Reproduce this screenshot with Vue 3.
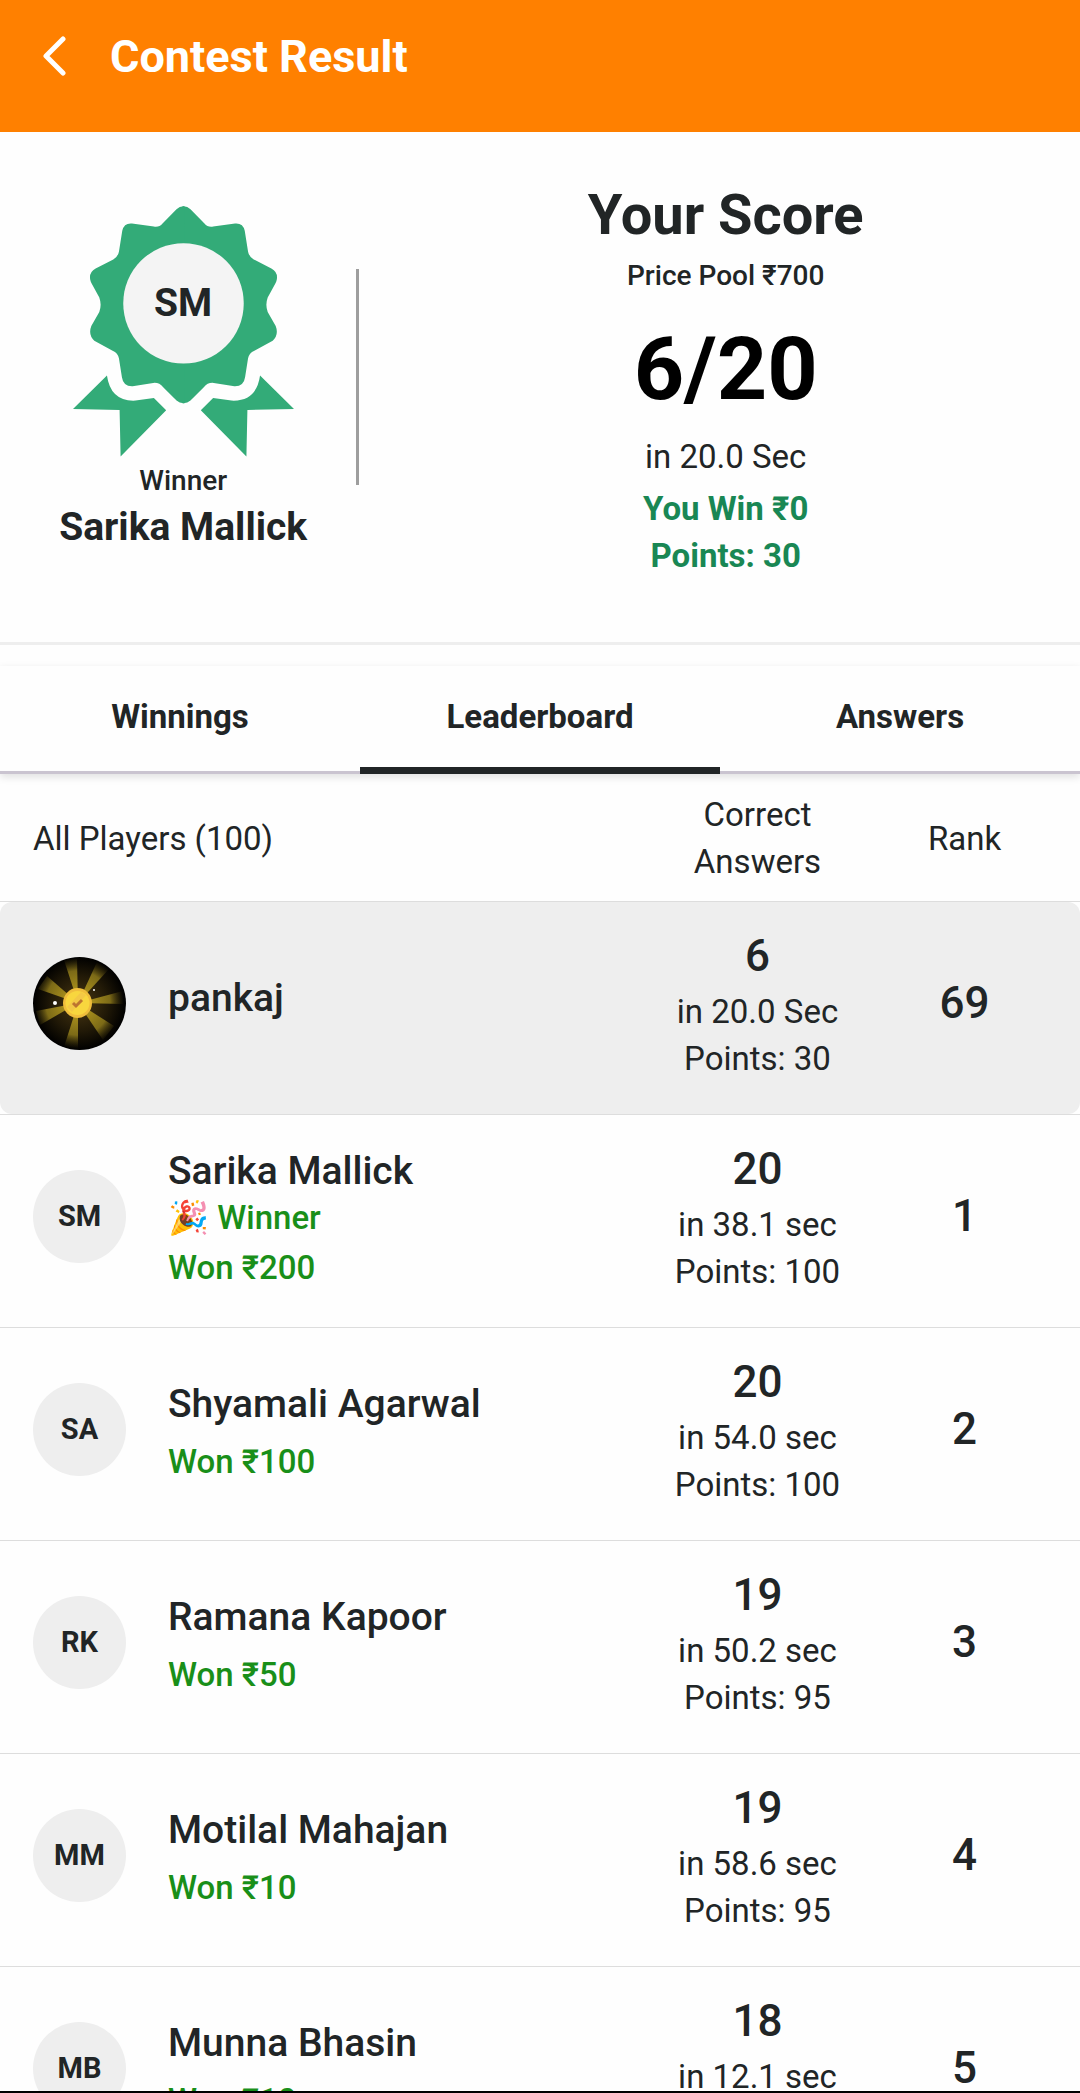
<script setup>
import { ref } from 'vue'

const tabs = ['Winnings', 'Leaderboard', 'Answers']
const active = ref('Leaderboard')

const players = [
  { id: 0, name: 'pankaj', me: true, correct: 6, time: 'in 20.0 Sec', points: 30, rank: 69 },
  { id: 1, initials: 'SM', name: 'Sarika Mallick', winner: true, won: 200, correct: 20, time: 'in 38.1 sec', points: 100, rank: 1 },
  { id: 2, initials: 'SA', name: 'Shyamali Agarwal', won: 100, correct: 20, time: 'in 54.0 sec', points: 100, rank: 2 },
  { id: 3, initials: 'RK', name: 'Ramana Kapoor', won: 50, correct: 19, time: 'in 50.2 sec', points: 95, rank: 3 },
  { id: 4, initials: 'MM', name: 'Motilal Mahajan', won: 10, correct: 19, time: 'in 58.6 sec', points: 95, rank: 4 },
  { id: 5, initials: 'MB', name: 'Munna Bhasin', won: 10, correct: 18, time: 'in 12.1 sec', points: 90, rank: 5 },
]
</script>

<template>
  <div class="screen">
    <header class="bar">
      <button class="back" type="button" aria-label="Back">
        <svg viewBox="0 0 24 42" width="24" height="42" aria-hidden="true">
          <path d="M21 4 4 21 21 38" fill="none" stroke="#fff" stroke-width="5" stroke-linecap="round" stroke-linejoin="round" />
        </svg>
      </button>
      <h1>Contest Result</h1>
    </header>

    <section class="summary">
      <div class="winner">
        <div class="medal">
          <svg viewBox="97 48 664 753" width="221" height="251" aria-hidden="true">
            <defs>
              <g id="medal-half" fill="#33ab78">
                <path d="M426 48H429Q441 48 450 57L492 100Q502 112 518 109L584 100Q608 98 613 122L623 185Q626 200 640 208L693 235Q714 246 709 270Q708 275 705 280L682 322Q674 344 682 366L706 408Q716 434 697 452L642 482Q626 489 623 505L614 562Q610 590 582 589L520 579Q502 577 490 592L450 632Q441 640 429 640H426Z" />
                <path d="M659 557 761 657 621 660 618 800 481 661 518 624 573 632Q648 636 659 557Z" />
              </g>
            </defs>
            <use href="#medal-half" />
            <use href="#medal-half" transform="matrix(-1 0 0 1 858 0)" />
            <circle cx="429" cy="340" r="181" fill="#f4f4f4" />
          </svg>
          <span class="medal-initials">SM</span>
        </div>
        <p class="small">Winner</p>
        <p class="winner-name">Sarika Mallick</p>
      </div>
      <div class="rule"></div>
      <div class="score">
        <h2>Your Score</h2>
        <p class="small pool">Price Pool ₹700</p>
        <p class="big">6/20</p>
        <p>in 20.0 Sec</p>
        <div class="gain">
          <p>You Win ₹0</p>
          <p>Points: 30</p>
        </div>
      </div>
    </section>

    <nav class="tabs" role="tablist">
      <button
        v-for="t in tabs"
        :key="t"
        type="button"
        role="tab"
        :aria-selected="active === t"
        :class="{ active: active === t }"
        @click="active = t"
      >{{ t }}</button>
    </nav>

    <table>
      <thead>
        <tr>
          <th class="all" scope="col">All Players (100)</th>
          <th scope="col">Correct<br />Answers</th>
          <th scope="col">Rank</th>
        </tr>
      </thead>
      <tbody>
        <tr v-for="p in players" :key="p.id" :class="{ me: p.me }">
          <td class="player">
            <span v-if="p.initials" class="avatar">{{ p.initials }}</span>
            <span v-else class="avatar coin">
              <svg viewBox="0 0 93 93" width="93" height="93" aria-hidden="true">
                <defs>
                  <radialGradient id="night">
                    <stop offset="0" stop-color="#4a3812" />
                    <stop offset="0.600" stop-color="#211907" />
                    <stop offset="1" stop-color="#000" />
                  </radialGradient>
                  <radialGradient id="ray" gradientUnits="userSpaceOnUse" cx="45" cy="46" r="46">
                    <stop offset="0.300" stop-color="#a58c1c" />
                    <stop offset="0.700" stop-color="#7c6a17" />
                    <stop offset="1" stop-color="#3a300a" stop-opacity="0" />
                  </radialGradient>
                </defs>
                <circle cx="46.500" cy="46.500" r="46.500" fill="url(#night)" />
                <g fill="url(#ray)">
                  <path d="M45 46 31 3 44 2Z" />
                  <path d="M45 46 64 5 76 12Z" />
                  <path d="M45 46 90 34 90 47Z" />
                  <path d="M45 46 81 69 70 83Z" />
                  <path d="M45 46 45 92 31 90Z" />
                  <path d="M45 46 7 68 3 54Z" />
                  <path d="M45 46 5 32 14 19Z" />
                </g>
                <ellipse cx="44.500" cy="46" rx="14.500" ry="15" fill="#efbd3c" />
                <circle cx="44.500" cy="46" r="12" fill="#f8d63e" />
                <path d="M34 50 48 35 53 38 39 55Z" fill="#f3c845" />
                <path d="M40 46 43 49 49 43" fill="none" stroke="#bd7430" stroke-width="3" />
                <circle cx="22" cy="46" r="2" fill="#fff" />
                <circle cx="61" cy="33" r="1" fill="#fff" />
              </svg>
            </span>
            <div class="who">
              <p class="name">{{ p.name }}</p>
              <p v-if="p.winner" class="tag">🎉 Winner</p>
              <p v-if="p.won" class="won">Won ₹{{ p.won }}</p>
            </div>
          </td>
          <td>
            <p class="num">{{ p.correct }}</p>
            <p>{{ p.time }}</p>
            <p>Points: {{ p.points }}</p>
          </td>
          <td class="num">{{ p.rank }}</td>
        </tr>
      </tbody>
    </table>
    <div class="edge"></div>
  </div>
</template>

<style>
body {
  margin: 0;
  background: #fefefe;
}
</style>

<style scoped>
.screen {
  position: relative;
  height: 100vh;
  overflow: hidden;
  font: 400 33px/47px Roboto, "Noto Sans", sans-serif;
  color: #212526;
}
h1, h2, p {
  margin: 0;
}
button {
  border: 0;
  padding: 0;
  background: none;
  font: inherit;
  color: inherit;
}
.bar {
  display: flex;
  align-items: center;
  height: 112px;
  padding: 0 42px 20px;
  background: #ff8000;
  color: #fff;
}
.back {
  display: flex;
  width: 68px;
}
h1 {
  font-size: 45px;
  font-weight: 700;
}

.summary {
  display: flex;
  align-items: flex-start;
  padding-top: 47px;
  padding-bottom: 63px;
  border-bottom: 3px solid #eee;
}
.winner {
  box-sizing: border-box;
  flex: 0 0 33%;
  padding: 27px 0 0 10px;
  text-align: center;
}
.medal {
  display: grid;
  justify-items: center;
}
.medal > * {
  grid-area: 1 / 1;
}
.medal-initials {
  padding-top: 74px;
  font-size: 39px;
  font-weight: 700;
}
.small {
  font-size: 28px;
  font-weight: 500;
}
.winner-name {
  font-size: 39px;
  font-weight: 700;
}
.rule {
  width: 3px;
  height: 216px;
  margin-top: 90px;
  background: #9e9e9e;
}
.score {
  flex: 1;
  padding-left: 12px;
  text-align: center;
}
h2 {
  font-size: 56px;
  line-height: 72px;
  font-weight: 700;
}
.pool {
  line-height: 50px;
}
.big {
  margin-top: 4px;
  font-size: 88px;
  line-height: 128px;
  font-weight: 700;
  color: #000;
}
.gain {
  margin-top: 5px;
  font-weight: 700;
  color: #198754;
}

.tabs {
  display: flex;
  margin-top: 21px;
  box-shadow: 0 3px 8px rgba(0, 0, 0, 0.12);
}
.tabs button {
  flex: 1;
  height: 108px;
  padding-bottom: 4px;
  border-bottom: 3px solid #cac4d0;
  font-weight: 700;
}
.tabs .active {
  padding-bottom: 0;
  border-bottom: 7px solid #212526;
}

table, thead, tbody {
  display: block;
}
tr {
  position: relative;
  display: grid;
  grid-template-columns: 1fr 207px 207px;
  align-items: center;
  padding: 22px 12px 32px 33px;
  border-bottom: 1px solid #ddd;
}
thead tr {
  padding-top: 17px;
  padding-bottom: 16px;
}
th, td {
  padding: 0;
  text-align: center;
  font-weight: 400;
}
.all {
  text-align: left;
}
.me::before {
  content: "";
  position: absolute;
  inset: 0;
  z-index: -1;
  border-radius: 12px;
  background: #eee;
}
.player {
  display: flex;
  align-items: center;
  gap: 42px;
  text-align: left;
}
.avatar {
  display: flex;
  align-items: center;
  justify-content: center;
  width: 93px;
  height: 93px;
  border-radius: 50%;
  background: #eee;
  font-size: 29px;
  font-weight: 700;
}
.who {
  padding-top: 8px;
}
.me .who {
  padding-bottom: 18px;
}
.name {
  font-size: 39px;
  line-height: 45px;
  font-weight: 500;
}
.tag, .won {
  font-weight: 500;
  color: #198f19;
}
.name + .won {
  margin-top: 11px;
}
.tag + .won {
  margin-top: 3px;
}
td.num, .num {
  font-size: 44px;
  line-height: 64px;
  font-weight: 500;
}
.edge {
  position: absolute;
  left: 0;
  right: 0;
  bottom: 0;
  height: 2px;
  background: #000;
}
</style>
